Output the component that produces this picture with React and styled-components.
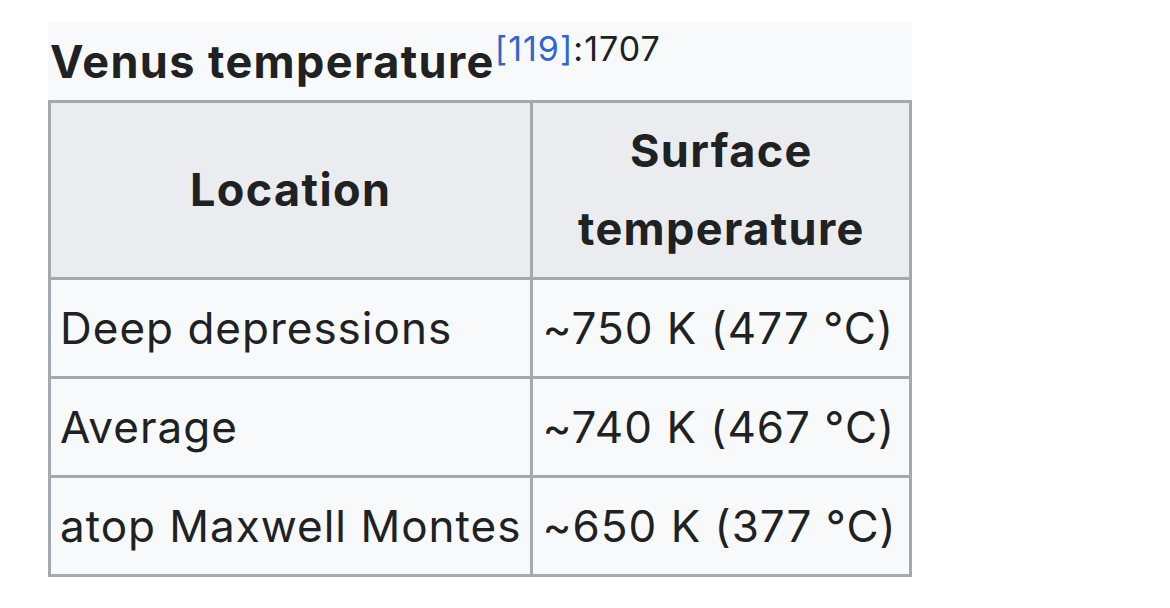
import React from "react";
import styled, { createGlobalStyle } from "styled-components";

const GlobalStyle = createGlobalStyle`
    body {
        margin: 0;
        background: #ffffff;
        font-family: Inter, "Noto Sans", sans-serif;
        color: #202122;
    }
`;

const Page = styled.div`
    padding: 22px 0 0 48px;
`;

const Table = styled.table`
    border-collapse: collapse;
    background: #f8f9fa;
    font-size: 44px;
    letter-spacing: 1px;
    line-height: 78px;
    color: #202122;
`;

const Caption = styled.caption`
    text-align: left;
    font-weight: 700;
    font-size: 45px;
    letter-spacing: 1.4px;
    line-height: 76px;
    padding: 2px 0 0 2px;
    background: #f8f9fa;
    white-space: nowrap;
`;

const Sup = styled.sup`
    font-weight: 400;
    font-size: 34px;
    letter-spacing: 1px;
    line-height: 1;
    vertical-align: 0;
    position: relative;
    top: -17px;
`;

const Ref = styled.span`
    color: #3366cc;
`;

const HeadCell = styled.th`
    border: 3px solid #a2a9b1;
    background: #eaecf0;
    font-weight: 700;
    font-size: 45px;
    letter-spacing: 1.4px;
    text-align: center;
    padding: 9px;
    width: ${(p) => p.$w || "auto"};
`;

const Cell = styled.td`
    border: 3px solid #a2a9b1;
    padding: 9px;
    white-space: nowrap;
`;

const rows = [
    ["Deep depressions", "~750 K (477 °C)"],
    ["Average", "~740 K (467 °C)"],
    ["atop Maxwell Montes", "~650 K (377 °C)"],
];

const App = () => {
    return (
        <Page>
            <GlobalStyle />
            <Table>
                <Caption>
                    Venus temperature
                    <Sup>
                        <Ref>[119]</Ref>:1707
                    </Sup>
                </Caption>
                <thead>
                    <tr>
                        <HeadCell>Location</HeadCell>
                        <HeadCell $w="358px">Surface temperature</HeadCell>
                    </tr>
                </thead>
                <tbody>
                    {rows.map(([place, temp]) => (
                        <tr key={place}>
                            <Cell>{place}</Cell>
                            <Cell>{temp}</Cell>
                        </tr>
                    ))}
                </tbody>
            </Table>
        </Page>
    );
};

export default App;
